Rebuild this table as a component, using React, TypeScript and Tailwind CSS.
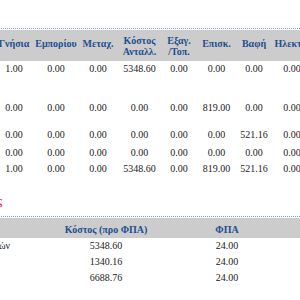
import React from 'react';

type Col = { title: string[]; w: string };

const cols: Col[] = [
  { title: ['Γνήσια'], w: 'w-[42px]' },
  { title: ['Εμπορίου'], w: 'w-[42px]' },
  { title: ['Μεταχ.'], w: 'w-[42px]' },
  { title: ['Κόστος', 'Ανταλλ.'], w: 'w-[41px]' },
  { title: ['Εξαγ.', '/Τοπ.'], w: 'w-[38px]' },
  { title: ['Επισκ.'], w: 'w-[37px]' },
  { title: ['Βαφή'], w: 'w-[38px]' },
  { title: ['Ηλεκτρ.'], w: 'w-[38px]' },
  { title: ['Σύνολο'], w: 'w-[60px]' },
];

const rows = [
  { label: 'Ανταλλακτικά', h: 'h-[39px]', v: ['1.00', '0.00', '0.00', '5348.60', '0.00', '0.00', '0.00', '0.00', '5349.60'] },
  { label: 'Εργασίες', h: 'h-[27px]', v: ['0.00', '0.00', '0.00', '0.00', '0.00', '819.00', '0.00', '0.00', '819.00'] },
  { label: 'Βαφές', h: 'h-[18px]', v: ['0.00', '0.00', '0.00', '0.00', '0.00', '0.00', '521.16', '0.00', '521.16'] },
  { label: 'Λοιπά', h: 'h-[16px]', v: ['0.00', '0.00', '0.00', '0.00', '0.00', '0.00', '0.00', '0.00', '0.00'] },
  { label: 'Σύνολο', h: 'h-[16px]', v: ['1.00', '0.00', '0.00', '5348.60', '0.00', '819.00', '521.16', '0.00', '6689.76'] },
];

const summary = [
  { label: 'Κόστος Ανταλλακτικών', cost: '5348.60', vat: '24.00' },
  { label: 'Εργασίες', cost: '1340.16', vat: '24.00' },
  { label: 'Σύνολο', cost: '6688.76', vat: '24.00' },
];

export default function App() {
  return (
    <div className="w-[300px] h-[300px] overflow-hidden bg-white font-['Liberation_Serif',serif] text-[10px] text-[#222]">
      <div className="-ml-[150px] w-[700px] pt-[28px]">
        <div className="border-t border-dotted border-[#7f9fd0]" />
        <table className="table-fixed border-collapse mt-[1px] w-[700px]">
          <thead>
            <tr className="bg-[#cccccc] h-[31px]">
              <th className="w-[143px]" />
              {cols.map(c => (
                <th key={c.title.join()} className={`${c.w} text-center align-middle font-bold text-[#1d4f91] leading-[11px] ${c.title.length === 1 ? 'pb-[4px]' : ''}`}>
                  {c.title.map(t => (<div key={t}>{t}</div>))}
                </th>
              ))}
              <th />
            </tr>
          </thead>
          <tbody>
            {rows.map(r => (
              <tr key={r.label} className={r.h}>
                <td className="align-top pt-[2px] pl-2 leading-[12px] text-left">{r.label}</td>
                {r.v.map((v, i) => (
                  <td key={i} className="align-top pt-[2px] leading-[12px] text-center">{v}</td>
                ))}
                <td />
              </tr>
            ))}
          </tbody>
        </table>

        <div className="mt-[17px] w-[152px] text-right text-[12px] font-bold text-[#e8336d] leading-[14px]">Ανάλυση Κόστους</div>
        <div className="mt-[8px] border-t border-dotted border-[#7f9fd0]" />
        <table className="table-fixed border-collapse mt-[1px] w-[700px]">
          <thead>
            <tr className="bg-[#cccccc] h-[20px]">
              <th className="w-[195px]" />
              <th className="w-[122px] text-center align-middle font-bold text-[#1d4f91] pt-[2px]">Κόστος (προ ΦΠΑ)</th>
              <th className="w-[120px] text-center align-middle font-bold text-[#1d4f91] pt-[2px]">ΦΠΑ</th>
              <th />
            </tr>
          </thead>
          <tbody>
            {summary.map((s, i) => (
              <tr key={s.label} className="h-[16px]">
                <td className={`align-middle leading-[12px] ${i === 0 ? 'text-right pr-[35px]' : 'text-left pl-2'}`}>{s.label}</td>
                <td className="align-middle leading-[12px] text-center">{s.cost}</td>
                <td className="align-middle leading-[12px] text-center">{s.vat}</td>
                <td />
              </tr>
            ))}
          </tbody>
        </table>
      </div>
    </div>
  );
}
